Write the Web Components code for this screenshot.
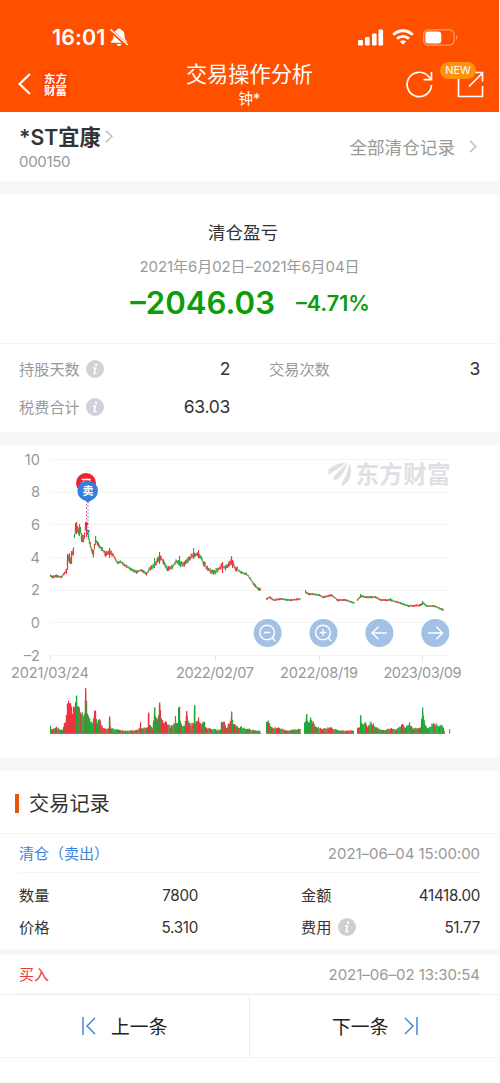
<!DOCTYPE html>
<html lang="zh-CN">
<head>
<meta charset="utf-8">
<title>交易操作分析</title>
<style>
    body {
        margin: 0;
        background: #fff;
        font-family: Inter, "Noto Sans CJK SC", sans-serif;
        color: #333;
    }
</style>
</head>
<body>
<trade-page></trade-page>

<script>
/** Small base class: each element only supplies its markup and styles */
class BaseElement extends HTMLElement {
    constructor() {
        super();
        this.attachShadow({ mode: 'open' });
    }

    connectedCallback() {
        this.shadowRoot.innerHTML = this.render();
    }
}

/** iOS status bar */
class StatusBar extends BaseElement {
    render() {
        return `
            <style>
                :host {
                    display: flex;
                    justify-content: space-between;
                    align-items: center;
                    height: 22px;
                    padding: 26px 41px 10px 52px;
                    color: #fff;
                }
                .left, .right { display: flex; align-items: center; }
                .time { font-size: 21.500px; font-weight: 600; letter-spacing: 0.100px; margin-right: 5px; }
                .right { gap: 9px; }
                .signal { margin-right: -1px; }
                svg { display: block; }
            </style>
            <div class="left">
                <span class="time">16:01</span>
                <svg width="18" height="19" viewBox="0 0 18 19">
                    <path d="M9 .5c-1.300 0-2 .8-2 1.600C4.500 3 3.500 5 3.500 7.500c0 3-.8 4.500-2.200 5.700-.7.700-.3 1.600.5 1.600h14.400c.8 0 1.200-.9.500-1.600-1.400-1.200-2.200-2.700-2.200-5.700C14.500 5 13.500 3 11 2.100 11 1.300 10.300.5 9 .5zM6.500 16a2.600 2.600 0 0 0 5 0z" fill="#fff"/>
                    <path d="M.8 2.600 17 17.200" stroke="#ff5000" stroke-width="3.600"/>
                    <path d="M.8 1.800 17.300 16.600" stroke="#fff" stroke-width="1.300" stroke-linecap="round"/>
                </svg>
            </div>
            <div class="right">
                <svg class="signal" width="26" height="17" viewBox="0 0 26 17" fill="#fff">
                    <rect x="0" y="11" width="5" height="5.500" rx="1.300"/>
                    <rect x="7" y="8" width="4.600" height="8.500" rx="1.300"/>
                    <rect x="14" y="4.500" width="4.600" height="12" rx="1.300"/>
                    <rect x="20.500" y="0.500" width="4.600" height="16" rx="1.300"/>
                </svg>
                <svg width="22" height="16" viewBox="0 0 22 16" fill="none" stroke="#fff" stroke-width="2.900">
                    <path d="M1.300 5.700a14 14 0 0 1 19.400 0"/>
                    <path d="M5 9.700a8.800 8.800 0 0 1 12 0"/>
                    <path d="M11 15.800 7.900 12.600a4.700 4.700 0 0 1 6.200 0z" fill="#fff" stroke="none"/>
                </svg>
                <svg width="35" height="17" viewBox="0 0 35 17">
                    <rect x=".6" y=".8" width="30.500" height="15.400" rx="4.800" fill="none" stroke="#ff9a6b" stroke-width="1.200"/>
                    <rect x="2.300" y="2.500" width="16" height="12" rx="3.200" fill="#fff"/>
                    <path d="M33 6v5c1.700-.8 1.700-4.200 0-5z" fill="#ff9a6b"/>
                </svg>
            </div>
        `;
    }
}
customElements.define('status-bar', StatusBar);

/** Title bar with back arrow, brand and two actions */
class NavBar extends BaseElement {
    render() {
        return `
            <style>
                :host {
                    display: grid;
                    grid-template-columns: 1fr auto 1fr;
                    align-items: center;
                    height: 54px;
                    padding: 0 15px 0 18px;
                    color: #fff;
                }
                svg { display: block; }
                .left { display: flex; align-items: center; gap: 11px; margin-top: -2px; }
                .brand {
                    font: 700 11.500px/12px "Noto Sans CJK SC", sans-serif;
                    text-align: center;
                    padding: 2px;
                    border-radius: 4px;
                    background: #ff4300;
                }
                .brand span { display: block; }
                .title { text-align: center; margin-left: -3px; }
                .title h1 { margin: 0; font-size: 21.200px; line-height: 28px; font-weight: 400; }
                .title p { margin: 0; font-size: 14.500px; line-height: 22px; }
                .right { display: flex; justify-content: flex-end; gap: 24px; margin-top: -2px; }
                .share { position: relative; }
                .badge {
                    position: absolute;
                    left: -17px;
                    top: -9px;
                    width: 36px;
                    height: 17px;
                    border-radius: 9px;
                    background: #ff920c;
                    font-size: 11px;
                    line-height: 17px;
                    text-align: center;
                }
            </style>
            <div class="left">
                <svg width="13" height="22" viewBox="0 0 13 22"><path d="M12 1 1.500 11 12 21" fill="none" stroke="#fff" stroke-width="2.200"/></svg>
                <div class="brand"><span>东方</span><span>财富</span></div>
            </div>
            <div class="title">
                <h1><slot></slot></h1>
                <p><slot name="sub"></slot></p>
            </div>
            <div class="right">
                <svg width="27" height="27" viewBox="0 0 27 27" fill="none" stroke="#fff" stroke-width="1.700">
                    <path d="M25.500 14A12.200 12.200 0 1 1 22.300 5.200L25 8"/>
                    <path d="M25.500 1v7.600h-8"/>
                </svg>
                <div class="share">
                    <svg width="27" height="27" viewBox="0 0 27 27" fill="none" stroke="#fff" stroke-width="1.700">
                        <path d="M8 1.500H1.500v24h24V15"/>
                        <path d="M12 15.500 25 2.500M17.500 1.500h8v9"/>
                    </svg>
                    <span class="badge">NEW</span>
                </div>
            </div>
        `;
    }
}
customElements.define('nav-bar', NavBar);

/** Stock name, code and link to the full list */
class StockHeader extends BaseElement {
    render() {
        return `
            <style>
                :host {
                    display: flex;
                    justify-content: space-between;
                    align-items: center;
                    height: 69px;
                    padding: 0 22px 0 19px;
                }
                .name { display: flex; align-items: center; gap: 4px; font-size: 21.200px; line-height: 26px; font-weight: 600; }
                .code { font-size: 15px; line-height: 24px; color: #999; letter-spacing: -0.300px; }
                .info { margin-top: 4px; }
                .all { display: flex; align-items: center; gap: 14px; font-size: 17.600px; color: #999; }
                svg { display: block; fill: none; stroke: #c4c4c4; stroke-width: 1.700; }
            </style>
            <div class="info">
                <div class="name"><slot></slot><svg width="8" height="13" viewBox="0 0 8 13"><path d="M1 .8 6.800 6.500 1 12.200"/></svg></div>
                <div class="code"><slot name="code"></slot></div>
            </div>
            <div class="all"><slot name="link"></slot><svg width="8" height="13" viewBox="0 0 8 13"><path d="M1 .8 6.800 6.500 1 12.200"/></svg></div>
        `;
    }
}
customElements.define('stock-header', StockHeader);

/** Grey band between sections */
class SectionGap extends BaseElement {
    render() {
        return `
            <style>
                :host { display: block; height: var(--gap, 13px); background: #f7f7f7; }
            </style>
        `;
    }
}
customElements.define('section-gap', SectionGap);

class ProfitSummary extends BaseElement {
    render() {
        return `
            <style>
                :host {
                    display: flex;
                    flex-direction: column;
                    align-items: center;
                    box-sizing: border-box;
                    height: 150px;
                    padding-top: 25px;
                    border-bottom: 1px solid #f5f5f5;
                }
                .title { font-size: 17.500px; line-height: 28px; margin-left: -13px; }
                .range { font-size: 15px; line-height: 24px; margin-top: 8px; color: #999; letter-spacing: -0.080px; }
                .result { display: flex; align-items: center; gap: 21px; margin: 6px 0 0 1px; line-height: 36px; color: #0a9e0a; font-weight: 600; }
                .amount { font-size: 31.200px; }
                .rate { font-size: 21.500px; }
            </style>
            <div class="title"><slot></slot></div>
            <div class="range"><slot name="range"></slot></div>
            <div class="result">
                <span class="amount"><slot name="amount"></slot></span>
                <span class="rate"><slot name="rate"></slot></span>
            </div>
        `;
    }
}
customElements.define('profit-summary', ProfitSummary);

/** Round "i" hint */
class InfoDot extends BaseElement {
    render() {
        return `
            <style>
                :host {
                    display: inline-flex;
                    align-items: center;
                    justify-content: center;
                    width: 18px;
                    height: 18px;
                    margin-top: var(--dot-top, 1px);
                    border-radius: 50%;
                    background: var(--dot, #cfd2d8);
                }
                svg { display: block; }
            </style>
            <svg width="18" height="18" viewBox="0 0 18 18" fill="none" stroke="#fff">
                <circle cx="10" cy="4.700" r="1.200" fill="#fff" stroke="none"/>
                <path d="M7 8h2.500l-1.400 5.600h2.500" stroke-width="1.500"/>
            </svg>
        `;
    }
}
customElements.define('info-dot', InfoDot);

/** Label on the left, value on the right */
class StatItem extends BaseElement {
    render() {
        return `
            <style>
                :host {
                    display: flex;
                    align-items: center;
                    justify-content: space-between;
                }
                .label { display: flex; align-items: center; gap: 6.500px; margin-top: var(--label-top, 0); font-size: 15.200px; color: var(--label, #999); }
                .value { font-size: var(--value-size, 17.500px); letter-spacing: var(--value-spacing, -0.300px); }
            </style>
            <span class="label"><slot></slot></span>
            <span class="value"><slot name="value"></slot></span>
        `;
    }
}
customElements.define('stat-item', StatItem);

class StatGrid extends BaseElement {
    render() {
        return `
            <style>
                :host {
                    display: grid;
                    grid-template-columns: var(--cols, 211px 211px);
                    justify-content: space-between;
                    grid-auto-rows: var(--row, 38px);
                    box-sizing: border-box;
                    height: var(--height, 88px);
                    padding: var(--top, 5px) 19px 0 19px;
                }
            </style>
            <slot></slot>
        `;
    }
}
customElements.define('stat-grid', StatGrid);

// Outline points: [x, y of the mid price]. One array for each unbroken run.
const PRICE_RUNS = [
    [[50,575],[52,577],[56,576],[61,577],[64,573],[66,570],[67,562],[68,558],[70,562],[71,556],[73,551],[74,534],[75,530],[76,526],[78,532],[80,530],[81,538],[83,539],[84,536],[85,526],[86,527],[87,532],[88,538],[90,546],[92,551],[93,554],[94,545],[95,540],[97,543],[98,544],[101,549],[105,554],[109,552],[113,555],[117,563],[120,562],[124,565],[130,569],[136,572],[141,570],[146,574],[150,567],[154,565],[157,560],[160,558],[163,562],[167,569],[172,567],[176,561],[180,564],[184,564],[188,559],[193,555],[197,554],[200,557],[203,563],[207,568],[213,573],[218,569],[221,566],[225,568],[228,565],[231,560],[235,568],[240,572],[246,574],[250,579],[254,585],[258,589],[260,589]],
    [[266,599],[269,597],[273,600],[280,599],[290,600],[300,599]],
    [[305,592],[308,594],[312,594],[318,595],[323,597],[331,595],[337,600],[345,600],[354,603]],
    [[357,600],[360,596],[365,597],[375,597],[380,600],[390,600],[400,603],[408,606],[420,605],[423,603],[426,606],[434,606],[443,610]]
];

// Single candles that stick out: [x, top, bottom, up]
const SPIKES = [
    [67,554,570,1],[69,553,563,1],[71,551,564,1],[75,523,530,1],[76,522,534,1],[79,524,536,0],[81,533,542,0],[85,522,529,0],[86,522,537,1],[95,536,545,0],[109,548,558,1],[154,558,568,0],
    [159,552,564,1],[179,556,564,0],[193,548,559,0],[198,550,558,1],[222,562,573,1],[231,556,565,0],[232,560,568,1],
    [305,590,593,0],[360,594,598,0],[390,598,600,0],[422,601,605,0]
];

// [x, bar height]
const VOLUME_RUNS = [
    [[50,8],[51,4],[55,7],[60,4],[62,4],[64,11],[65,11],[66,20],[67,30],[68,32],[70,28],[72,22],[74,28],[75,34],[76,38],[77,27],[80,24],[84,19],[85,42],[86,30],[87,20],[89,14],[92,10],[94,20],[95,23],[96,13],[97,12],[99,14],[103,5],[108,5],[109,16],[110,5],[118,4],[125,3],[135,3],[139,5],[140,11],[141,5],[146,7],[147,6],[148,21],[149,9],[152,5],[153,12],[154,26],[156,17],[158,17],[159,31],[160,20],[162,13],[165,12],[170,7],[174,12],[175,17],[176,10],[178,10],[179,26],[180,11],[184,7],[186,22],[188,10],[193,10],[194,28],[195,12],[198,16],[201,8],[204,14],[205,6],[210,5],[215,4],[220,4],[221,13],[224,13],[226,6],[229,12],[231,22],[232,15],[233,10],[236,7],[240,7],[248,5],[255,3],[260,3]],
    [[266,11],[268,13],[270,6],[278,6],[285,3],[300,5]],
    [[304,12],[306,19],[308,12],[311,15],[315,7],[322,5],[330,6],[340,3],[353,3]],
    [[357,6],[359,6],[360,18],[361,11],[365,11],[367,6],[371,12],[375,6],[385,3],[390,6],[395,4],[402,9],[405,6],[409,11],[412,5],[420,6],[421,15],[422,26],[424,12],[427,5],[433,11],[438,8],[442,8],[444,2]],
    [[449,5],[449.500,5]]
];

// Volume bars that tower over their neighbours: [x, height, up]
const VOLUME_PEAKS = [
    [76,38,0],[85,42,1],[94,23,1],[109,16,1],[148,21,1],[154,26,0],[159,31,1],[178,26,0],[186,22,1],[194,28,0],[231,22,0],
    [306,19,0],[310,16,0],[360,18,0],[422,26,0]
];

const UP = '#ee3340';
const DOWN = '#1fab3a';

/** Price and volume chart; drawn in page pixels, offset so the chart starts at y = 445 */
class TradeChart extends BaseElement {
    constructor() {
        super();
        this.seed = 7;
    }

    random() {
        this.seed = (this.seed * 16807) % 2147483647;
        return this.seed / 2147483647;
    }

    walk(points, draw) {
        for (let i = 0; i < points.length - 1; i++) {
            const [x1, y1] = points[i];
            const [x2, y2] = points[i + 1];
            for (let x = x1; x < x2; x += 0.85) {
                draw(x, y1 + (y2 - y1) * (x - x1) / (x2 - x1), y2 - y1);
            }
        }
    }

    bar(x, top, bottom, up, width = 1.1) {
        return `<rect x="${x.toFixed(1)}" y="${top.toFixed(1)}" width="${width}" height="${(bottom - top).toFixed(1)}" fill="${up ? UP : DOWN}"/>`;
    }

    prices() {
        let out = '';
        PRICE_RUNS.forEach((run, n) => {
            this.walk(run, (x, y, slope) => {
                const range = n ? 0.7 : x < 65 || (x > 112 && x < 146) || x > 237 ? 1.2 : x < 96 ? 3.6 : 2.6;
                const top = y - 0.4 - this.random() * range;
                const bottom = y + 0.6 + this.random() * range;
                out += this.bar(x, top, bottom, this.random() > (slope > 0 ? 0.7 : 0.3));
            });
        });
        SPIKES.forEach(([x, top, bottom, up]) => {
            out += this.bar(x, top, bottom, up);
        });
        return out;
    }

    volumes() {
        let out = '';
        VOLUME_RUNS.forEach(run => {
            this.walk(run, (x, h) => {
                const height = Math.max(1.5, h * (0.75 + this.random() * 0.35));
                const reds = x > 65 && x < 76 ? 1 : x > 86 && x < 93 ? 0 : x > 423 || (x > 303 && x < 307) ? 0.15 : 0.5;
                out += this.bar(x, 733.5 - height, 733.5, this.random() < reds, 1.2);
            });
        });
        VOLUME_PEAKS.forEach(([x, height, up]) => {
            out += this.bar(x, 733.5 - height, 733.5, up, 1.3);
        });
        return out;
    }

    grid() {
        return [10, 8, 6, 4, 2, 0, -2].map((value, i) => {
            const y = 459.5 + i * 32.67;
            const label = value < 0 ? '–' + -value : value;
            return `<path d="M50 ${Math.floor(y) + 0.5}H449" stroke="#f4f4f4"/>
                <text x="40" y="${y + 5.3}" text-anchor="end">${label}</text>`;
        }).join('');
    }

    dates() {
        return [['2021/03/24', 50], ['2022/02/07', 215], ['2022/08/19', 319], ['2023/03/09', 422.5]].map(([date, x]) =>
            `<path d="M${Math.floor(x) + 0.5} 656v5" stroke="#e4e4e4"/><text x="${x}" y="678.3" text-anchor="middle" textLength="78">${date}</text>`
        ).join('');
    }

    buttons() {
        const icons = [
            '<circle cx="-.5" cy="-.5" r="7.300"/><path d="M4.500 4.500 7.800 8.300M-3.800-.5h6.600"/>',
            '<circle cx="-.5" cy="-.5" r="7.300"/><path d="M4.500 4.500 7.800 8.300M-3.800-.5h6.600M-.5-3.800v6.600"/>',
            '<path d="M7.500 0h-14.500M-1-6.300-7.300 0-1 6.300"/>',
            '<path d="M-7.500 0h14.500M1-6.300 7.300 0 1 6.300"/>'
        ];
        return icons.map((icon, i) => `
            <g transform="translate(${267.6 + i * 55.9} 633)" fill="none" stroke="#fff" stroke-width="1.400">
                <circle r="14" fill="#a2c1e4" stroke="none"/>${icon}
            </g>`).join('');
    }

    render() {
        return `
            <style>
                :host { display: block; height: 313px; }
                svg { display: block; }
                text { font-size: 14.600px; fill: #999; }
                .mark { font: 700 23.500px "Noto Sans CJK SC", sans-serif; fill: #e0e0e4; }
                .pin { font: 700 11px "Noto Sans CJK SC", sans-serif; fill: #fff; }
            </style>
            <svg width="499" height="313" viewBox="0 445 499 313">
                ${this.grid()}
                <g fill="#e0e0e4">
                    <path d="M328.500 475v-5.500c5-4.500 10.500-6.500 17.500-7-4.500 3.500-6.500 6.500-12 8.500z"/>
                    <path d="M333.500 481c-.2-3 .5-5 3-7.500 4-4 7-7 10.500-10.500-1.500 7.500-5.500 15-13.500 18z"/>
                    <path d="M341.500 486c-.2-2 .5-3.500 2-6 3-5 5-10 5.500-16.500 2 3.500 2.500 8 1.500 12-1.500 6-4.500 9-9 10.500z"/>
                </g>
                <text class="mark" x="355.5" y="482.500" textLength="95">东方财富</text>
                ${this.prices()}
                ${this.volumes()}
                <path d="M50 733.500H261M266 733.500H301M304 733.500H354M357 733.500H445" stroke="#8a8a38"/>
                ${this.dates()}
                <path d="M86.500 497v27" stroke="#e65565" stroke-dasharray="1.500 2"/>
                <path d="M88 502v29" stroke="#5a86dc" stroke-dasharray="1.500 2"/>
                <circle cx="86.500" cy="524" r="1.700" fill="#f0222c"/>
                <circle cx="88" cy="531.300" r="1.700" fill="#3d82dd"/>
                <circle cx="86" cy="483" r="10" fill="#f0222c"/>
                <text class="pin" x="86" y="487.500" text-anchor="middle">买</text>
                <path d="M83 499h10l-5 3.500z" fill="#367fe0"/>
                <circle cx="87.700" cy="490.700" r="10.300" fill="#367fe0"/>
                <text class="pin" x="88" y="495" text-anchor="middle">卖</text>
                ${this.buttons()}
            </svg>
        `;
    }
}
customElements.define('trade-chart', TradeChart);

class SectionTitle extends BaseElement {
    render() {
        return `
            <style>
                :host {
                    display: flex;
                    align-items: center;
                    gap: 10px;
                    box-sizing: border-box;
                    height: 63px;
                    padding-left: 15px;
                    border-bottom: 1px solid #f5f5f5;
                    font-size: 20.200px;
                }
                i { width: 4px; height: 19px; margin-top: 2px; background: #e8520c; }
            </style>
            <i></i><span><slot></slot></span>
        `;
    }
}
customElements.define('section-title', SectionTitle);

/** Trade type and its time */
class RecordHead extends BaseElement {
    render() {
        return `
            <style>
                :host {
                    display: flex;
                    align-items: center;
                    justify-content: space-between;
                    box-sizing: border-box;
                    height: 39px;
                    margin: 0 19px;
                    border-bottom: 1px solid #f5f5f5;
                    font-size: 15px;
                    color: var(--type, #3b82e0);
                }
                .type { margin-top: -1px; }
                .time { color: #999; letter-spacing: -0.030px; }
            </style>
            <span class="type"><slot></slot></span>
            <span class="time"><slot name="time"></slot></span>
        `;
    }
}
customElements.define('record-head', RecordHead);

class PageSwitcher extends BaseElement {
    render() {
        return `
            <style>
                :host {
                    display: grid;
                    grid-template-columns: 249px 1fr;
                    box-sizing: border-box;
                    height: 64px;
                    border-top: 1px solid #efefef;
                    border-bottom: 1px solid #f3f3f3;
                    font-size: 18.800px;
                    color: #222;
                }
                div { display: flex; align-items: center; justify-content: center; gap: 15.500px; padding-bottom: 1px; }
                .next { border-left: 1px solid #efefef; padding-left: 1px; }
                svg { display: block; fill: none; stroke: #3b7fd4; stroke-width: 1.400; }
            </style>
            <div><svg width="14" height="18" viewBox="0 0 14 18"><path d="M1 0v18M13 1 5 9l8 8"/></svg><slot name="prev"></slot></div>
            <div class="next"><slot name="next"></slot><svg width="14" height="18" viewBox="0 0 14 18"><path d="M13 0v18M1 1l8 8-8 8"/></svg></div>
        `;
    }
}
customElements.define('page-switcher', PageSwitcher);

class TradePage extends BaseElement {
    render() {
        return `
            <style>
                :host { display: block; width: 499px; }
                header { background: #ff5000; }
                .record {
                    --cols: 179px 179px;
                    --row: 32px;
                    --height: 76px;
                    --top: 6px;
                    --label: #333;
                    --label-top: -2px;
                    --value-size: 15.200px;
                    --value-spacing: -0.300px;
                    --dot: #cdd0d3;
                    --dot-top: 2px;
                }
                .thin { --gap: 6px; }
                .buy { --type: #e8393c; }
            </style>
            <header>
                <status-bar></status-bar>
                <nav-bar>交易操作分析<span slot="sub">钟*</span></nav-bar>
            </header>
            <stock-header>*ST宜康<span slot="code">000150</span><span slot="link">全部清仓记录</span></stock-header>
            <section-gap></section-gap>
            <profit-summary>清仓盈亏
                <span slot="range">2021年6月02日–2021年6月04日</span>
                <span slot="amount">–2046.03</span>
                <span slot="rate">–4.71%</span>
            </profit-summary>
            <stat-grid>
                <stat-item>持股天数<info-dot></info-dot><span slot="value">2</span></stat-item>
                <stat-item>交易次数<span slot="value">3</span></stat-item>
                <stat-item>税费合计<info-dot></info-dot><span slot="value">63.03</span></stat-item>
            </stat-grid>
            <section-gap></section-gap>
            <trade-chart></trade-chart>
            <section-gap></section-gap>
            <section-title>交易记录</section-title>
            <record-head>清仓（卖出）<span slot="time">2021–06–04 15:00:00</span></record-head>
            <stat-grid class="record">
                <stat-item>数量<span slot="value">7800</span></stat-item>
                <stat-item>金额<span slot="value">41418.00</span></stat-item>
                <stat-item>价格<span slot="value">5.310</span></stat-item>
                <stat-item>费用<info-dot></info-dot><span slot="value">51.77</span></stat-item>
            </stat-grid>
            <section-gap class="thin"></section-gap>
            <record-head class="buy">买入<span slot="time">2021–06–02 13:30:54</span></record-head>
            <page-switcher><span slot="prev">上一条</span><span slot="next">下一条</span></page-switcher>
        `;
    }
}
customElements.define('trade-page', TradePage);
</script>
</body>
</html>
